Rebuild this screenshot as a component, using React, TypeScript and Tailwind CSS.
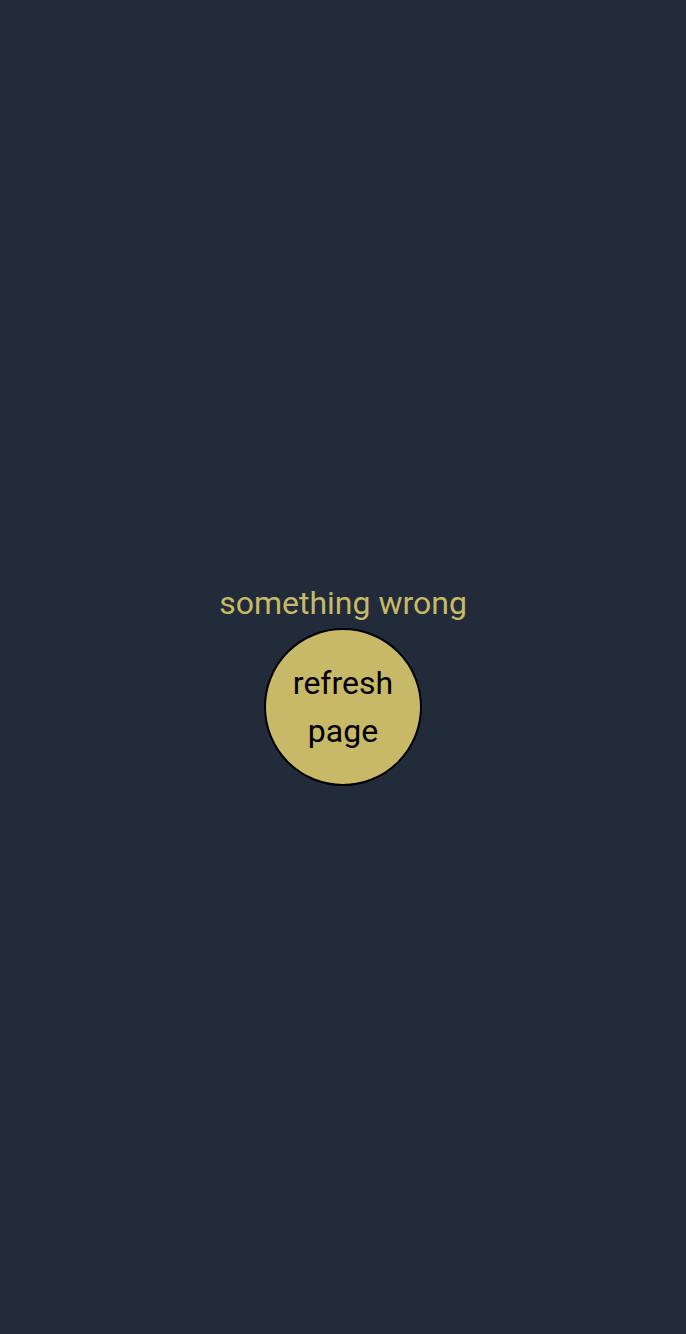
export default function App() {
  return (
    <div
      className="min-h-screen w-full flex flex-col items-center justify-center bg-[#222b3a] pt-[35px]"
      style={{ fontFamily: "Roboto, 'Noto Sans', sans-serif" }}
    >
      <p className="text-[32px] leading-[40px] text-[#c8b968]">something wrong</p>
      <button
        type="button"
        onClick={() => window.location.reload()}
        className="mt-[5px] w-[158px] h-[158px] rounded-full bg-[#c8b968] border-2 border-black text-black text-[32px] leading-[48px] flex items-center justify-center text-center"
      >
        refresh
        <br />
        page
      </button>
    </div>
  );
}
